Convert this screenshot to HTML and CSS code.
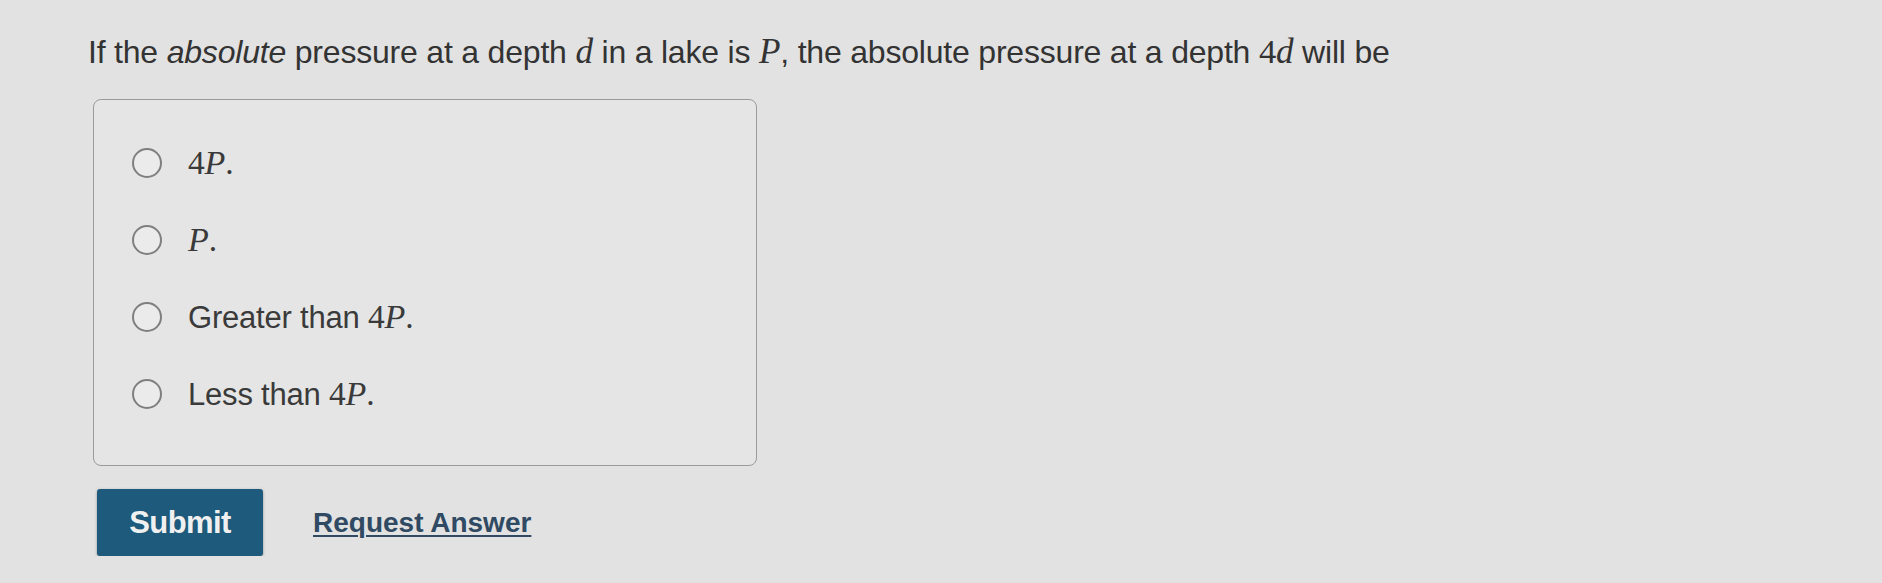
FILE: index.html
```html
<!DOCTYPE html>
<html>
<head>
<meta charset="utf-8">
<link rel="stylesheet" href="styles.css">
</head>
<body>
<div class="page">
  <p class="question">If the <em>absolute</em> pressure at a depth <span class="m">d</span> in a lake is <span class="m">P</span>, the absolute pressure at a depth <span class="mu">4</span><span class="m">d</span> will be</p>
  <div class="choices">
    <label class="choice"><span class="radio"></span><span class="txt"><span class="mu">4</span><span class="m">P</span><span class="mu">.</span></span></label>
    <label class="choice"><span class="radio"></span><span class="txt"><span class="m">P</span><span class="mu">.</span></span></label>
    <label class="choice"><span class="radio"></span><span class="txt">Greater than <span class="mu">4</span><span class="m">P</span><span class="mu">.</span></span></label>
    <label class="choice"><span class="radio"></span><span class="txt">Less than <span class="mu">4</span><span class="m">P</span><span class="mu">.</span></span></label>
  </div>
  <div class="actions">
    <button class="submit">Submit</button>
    <a class="request" href="#">Request Answer</a>
  </div>
</div>
</body>
</html>
```

FILE: styles.css
```css
html, body {
  margin: 0;
  padding: 0;
  background: #e2e2e2;
}
body {
  font-family: "Liberation Sans", Arial, sans-serif;
  color: #333333;
}
.page {
  padding: 31px 0 0 88px;
}
.question {
  margin: 0;
  font-size: 32px;
  line-height: 40px;
  letter-spacing: -0.2px;
}
.question em {
  font-style: italic;
}
.m {
  font-family: "Liberation Serif", "Times New Roman", serif;
  font-style: italic;
  font-size: 1.1em;
}
.mu {
  font-family: "Liberation Serif", "Times New Roman", serif;
  font-size: 1.08em;
}
.choices {
  margin: 27px 0 0 5px;
  width: 664px;
  height: 367px;
  box-sizing: border-box;
  border: 1.5px solid #9b9b9b;
  border-radius: 8px;
  background: #e5e5e5;
  padding: 41px 0 0 38px;
  display: flex;
  flex-direction: column;
  gap: 33px;
}
.choice {
  display: flex;
  align-items: center;
  height: 44px;
  gap: 26px;
  font-size: 31px;
  color: #3a3a3a;
  letter-spacing: -0.2px;
}
.radio {
  width: 26px;
  height: 26px;
  border: 2px solid #7f7f7f;
  border-radius: 50%;
  background: #ebebeb;
  flex: none;
}
.actions {
  margin: 23px 0 0 9px;
  display: flex;
  align-items: center;
  gap: 50px;
}
.submit {
  width: 166px;
  height: 67px;
  border: none;
  border-radius: 3px;
  background: #1d5a7b;
  color: #f0f0f0;
  font-family: "Liberation Sans", Arial, sans-serif;
  font-weight: bold;
  font-size: 31px;
  letter-spacing: -0.6px;
  box-shadow: 0 1px 3px rgba(0,0,0,0.35);
  padding: 0;
}
.request {
  color: #2f4a62;
  font-weight: bold;
  font-size: 28px;
  text-decoration: underline;
  text-decoration-thickness: 2px;
  text-underline-offset: 3px;
}
```
